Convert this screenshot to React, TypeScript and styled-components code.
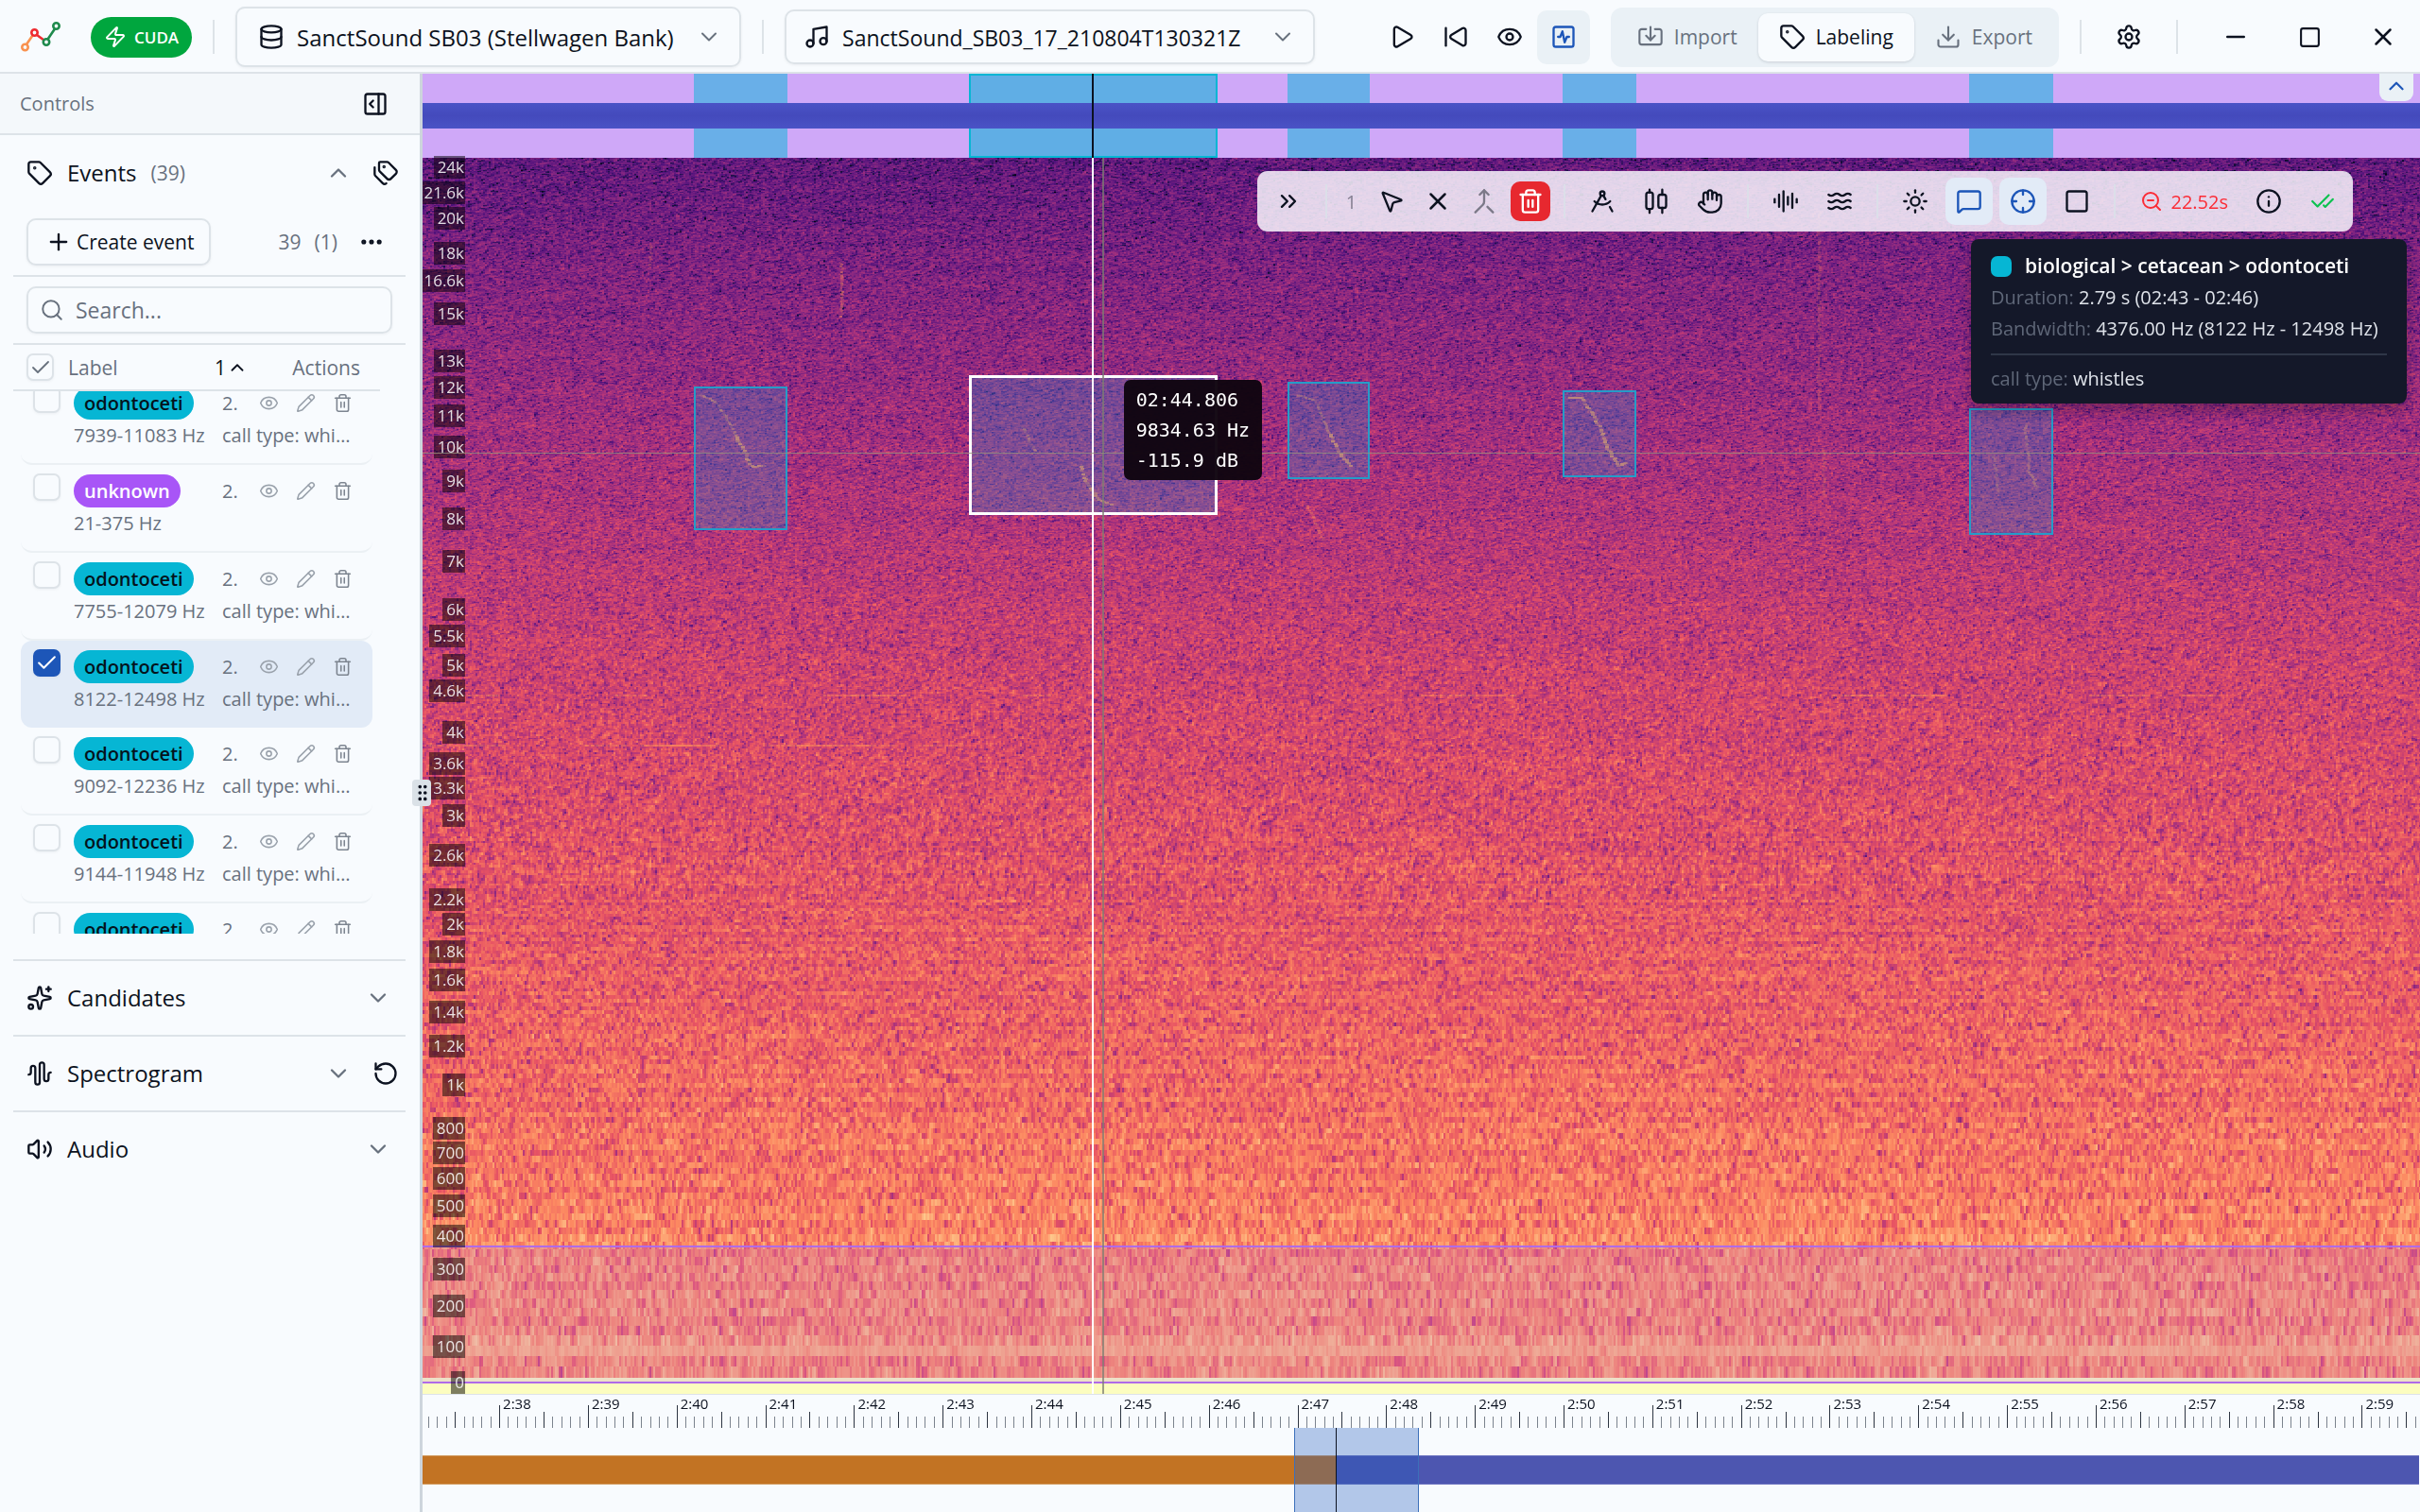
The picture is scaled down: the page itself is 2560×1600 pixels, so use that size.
import React, { useEffect, useRef } from "react";
import styled, { createGlobalStyle, css } from "styled-components";
import {
  AudioLines, AudioWaveform, Check, CheckCheck, ChevronDown, ChevronsRight, ChevronUp, Crosshair,
  Database, Download, DraftingCompass, Ellipsis, Eye, GripVertical, Hand, Import, Info, Merge,
  MessageSquare, Minus, MousePointer2, Music, PanelRightOpen, Pencil, Play, Plus, RotateCcw, Search,
  Settings, SkipBack, Sparkles, Square, SquareActivity, Sun, Tag, Tags, Trash2, Volume2, Waves, X,
  Zap, ZoomOut,
} from "lucide-react";

const c = {
  bg: "#f8fbfe",
  panel: "#f4f8fb",
  ink: "#0c1220",
  muted: "#68717e",
  line: "#dde3e8",
  soft: "#eaf1f6",
  blue: "#1d56b8",
  cyan: "#06b6d4",
  purple: "#a855f7",
};

const Global = createGlobalStyle`
  * { box-sizing: border-box; }
  body { margin: 0; background: ${c.bg}; color: ${c.ink}; font-family: "Open Sans", "Noto Sans", sans-serif; }
  button, input, select { font: inherit; color: inherit; }
  svg { display: block; flex: none; }
`;

/* ---------- time and frequency scales ---------- */

const T0 = 157.136;
const SPAN = 22.52;
const mel = (hz: number) => 2595 * Math.log10(1 + hz / 700);
const MAX_MEL = mel(24000);
const xPct = (t: number) => ((t - T0) / SPAN) * 100;
const yPct = (hz: number) => (1 - mel(hz) / MAX_MEL) * 100;

type Region = { start: number; end: number; low: number; high: number; selected?: boolean };

const regions: Region[] = [
  { start: 160.19, end: 161.25, low: 7755, high: 12079 },
  { start: 163.3, end: 166.1, low: 8122, high: 12498, selected: true },
  { start: 166.89, end: 167.82, low: 9092, high: 12236 },
  { start: 169.985, end: 170.82, low: 9144, high: 11948 },
  { start: 174.575, end: 175.52, low: 7640, high: 11290 },
];

const PLAYHEAD = 164.695;
const CURSOR = { time: 164.806, hz: 9834.63 };

/* ---------- shell ---------- */

const Shell = styled.div`
  display: flex;
  flex-direction: column;
  height: 100vh;
  overflow: hidden;
`;

const Header = styled.header`
  display: flex;
  align-items: center;
  justify-content: space-between;
  height: 78px;
  flex: none;
  padding-top: 2px;
  border-bottom: 2px solid ${c.line};
`;

const Cluster = styled.div<{ $gap?: number }>`
  display: flex;
  align-items: center;
  gap: ${(p) => p.$gap ?? 22}px;
`;

const StartCluster = styled(Cluster)`
  padding-left: 22px;
`;

const LogoLink = styled.a`
  display: block;
  width: 52px;
`;

const Rule = styled.span`
  width: 2px;
  height: 36px;
  background: ${c.line};
`;

const CudaBadge = styled.button`
  display: flex;
  align-items: center;
  gap: 8px;
  height: 43px;
  padding: 0 14px;
  border: 0;
  border-radius: 22px;
  background: #00a63e;
  color: #fff;
  font-size: 17px;
  font-weight: 600;
`;

const Picker = styled.label<{ $large?: boolean }>`
  display: flex;
  align-items: center;
  gap: 13px;
  height: ${(p) => (p.$large ? 64 : 58)}px;
  padding: 0 18px 0 ${(p) => (p.$large ? 22 : 18)}px;
  border: 2px solid ${c.line};
  border-radius: 10px;
  box-shadow: 0 1px 3px rgba(15, 23, 42, 0.06);
  font-size: ${(p) => (p.$large ? 24 : 23)}px;
  & > svg:last-child { color: ${c.muted}; }
`;

const PickerSelect = styled.select<{ $w: number }>`
  appearance: none;
  width: ${(p) => p.$w}px;
  padding: 2px 0 0;
  border: 0;
  background: transparent;
  font-weight: 500;
  line-height: 36px;
`;

const IconButton = styled.button<{ $on?: boolean; $w?: number }>`
  display: grid;
  place-items: center;
  width: ${(p) => p.$w ?? 56}px;
  height: 57px;
  padding: 0;
  border: 0;
  border-radius: 10px;
  background: ${(p) => (p.$on ? c.soft : "transparent")};
  color: ${(p) => (p.$on ? c.blue : c.ink)};
`;

const Tabs = styled.nav`
  display: flex;
  padding: 6px;
  border-radius: 12px;
  background: ${c.soft};
`;

const Tab = styled.button<{ $on?: boolean }>`
  display: flex;
  align-items: center;
  gap: 11px;
  height: 51px;
  padding: 0 22px;
  border: 0;
  border-radius: 10px;
  background: transparent;
  color: ${c.muted};
  font-size: 21px;
  ${(p) =>
    p.$on &&
    css`
      background: ${c.bg};
      color: ${c.ink};
      font-weight: 500;
      box-shadow: 0 1px 3px rgba(15, 23, 42, 0.15);
    `}
`;

const Body = styled.div`
  display: grid;
  grid-template-columns: 444px 3px minmax(0, 1fr);
  flex: 1;
  min-height: 0;
`;

/* ---------- sidebar ---------- */

const Sidebar = styled.aside`
  display: flex;
  flex-direction: column;
  min-width: 0;
`;

const SidebarHead = styled.div`
  display: flex;
  align-items: center;
  justify-content: space-between;
  height: 65px;
  padding: 0 20px 0 21px;
  border-bottom: 2px solid ${c.line};
  background: ${c.panel};
  color: ${c.muted};
  font-size: 20px;
`;

const SidebarBody = styled.div`
  padding: 0 15px 0 14px;
`;

const SectionHead = styled.div<{ $line?: boolean }>`
  display: flex;
  align-items: center;
  height: ${(p) => (p.$line ? 80 : 79)}px;
  padding-left: 14px;
  border-top: ${(p) => (p.$line ? `2px solid ${c.line}` : "0")};
`;

const SectionTitle = styled.h2`
  display: flex;
  flex: 1;
  align-items: center;
  gap: 15px;
  margin: 0;
  font-size: 24px;
  font-weight: 500;
  line-height: 32px;
`;

const Count = styled.span`
  color: ${c.muted};
  font-size: 21px;
  font-weight: 400;
`;

const GhostButton = styled.button<{ $w?: number; $muted?: boolean }>`
  display: grid;
  place-items: center;
  width: ${(p) => p.$w ?? 42}px;
  height: 42px;
  padding: 0;
  border: 0;
  background: transparent;
  color: ${(p) => (p.$muted ? c.muted : c.ink)};
`;

const ActionsBar = styled.div`
  display: flex;
  align-items: center;
  height: 71px;
  padding: 9px 0 10px 14px;
  border-bottom: 2px solid ${c.line};
  color: ${c.muted};
  font-size: 21px;
`;

const CreateButton = styled.button`
  display: flex;
  align-items: center;
  gap: 5px;
  height: 50px;
  margin-right: auto;
  padding: 0 16px 0 18px;
  border: 2px solid ${c.line};
  border-radius: 10px;
  background: ${c.bg};
  color: ${c.ink};
  font-size: 21px;
  font-weight: 500;
  box-shadow: 0 1px 3px rgba(15, 23, 42, 0.06);
`;

const Total = styled.span`
  margin-right: 14px;
`;

const SearchBar = styled.div`
  padding: 10px 14px;
  border-bottom: 2px solid ${c.line};
`;

const SearchBox = styled.label`
  display: flex;
  align-items: center;
  gap: 12px;
  height: 50px;
  padding: 0 12px;
  border: 2px solid ${c.line};
  border-radius: 10px;
  color: ${c.muted};
  box-shadow: 0 1px 3px rgba(15, 23, 42, 0.05);
`;

const SearchInput = styled.input`
  width: 100%;
  padding: 0;
  border: 0;
  outline: 0;
  background: transparent;
  font-size: 23px;
  &::placeholder { color: ${c.muted}; opacity: 1; }
`;

const EventTable = styled.table`
  display: block;
  height: 623px;
  width: 388px;
  overflow: hidden;
  margin-bottom: 27px;
  color: ${c.muted};
`;

const TableHead = styled.thead`
  display: block;
  position: relative;
  z-index: 1;
  background: ${c.bg};
`;

const HeadRow = styled.tr`
  display: grid;
  grid-template-columns: 44px 155px 1fr auto;
  align-items: center;
  height: 49px;
  padding: 0 21px 0 14px;
  border-bottom: 2px solid ${c.line};
  font-size: 21px;
`;

const HeadCell = styled.th<{ $dark?: boolean }>`
  display: flex;
  align-items: center;
  gap: 1px;
  padding: 0;
  font-weight: 500;
  color: ${(p) => (p.$dark ? c.ink : c.muted)};
`;

const Rows = styled.tbody`
  display: block;
  margin: -15px 8px 0;
`;

const Row = styled.tr<{ $on?: boolean }>`
  display: grid;
  grid-template-columns: 43px 157px 39px 1fr;
  grid-template-rows: 36px 33px;
  height: ${(p) => (p.$on ? 92 : 93)}px;
  padding: 9px 8px 0 13px;
  border-radius: 12px;
  border-bottom: ${(p) => (p.$on ? "0" : "2px solid #ebf0f4")};
  background: ${(p) => (p.$on ? "#e2ebf7" : "transparent")};
  font-size: 20px;
`;

const Cell = styled.td<{ $wide?: boolean; $start?: number; $top?: boolean }>`
  display: flex;
  align-items: ${(p) => (p.$top ? "flex-start" : "center")};
  padding: 0;
  min-width: 0;
  white-space: nowrap;
  grid-column: ${(p) => (p.$wide ? "3 / 5" : p.$start ?? "auto")};
`;

const Clip = styled.span`
  overflow: hidden;
  max-width: 142px;
  text-overflow: ellipsis;
  white-space: nowrap;
`;

const CheckBox = styled.label`
  display: grid;
  place-items: center;
  width: 29px;
  height: 29px;
  & > * { grid-area: 1 / 1; }
  & > svg { z-index: 1; pointer-events: none; }
`;

const CheckInput = styled.input`
  appearance: none;
  width: 29px;
  height: 29px;
  margin: 0;
  border: 2px solid ${c.line};
  border-radius: 7px;
  background: ${c.bg};
  box-shadow: 0 1px 3px rgba(15, 23, 42, 0.05);
  &[data-fill="true"] {
    border-color: ${c.blue};
    background: ${c.blue};
  }
`;

const Pill = styled.span<{ $unknown?: boolean }>`
  height: 35px;
  padding: 0 11px;
  border-radius: 18px;
  background: ${(p) => (p.$unknown ? c.purple : c.cyan)};
  color: ${(p) => (p.$unknown ? "#fff" : "#04131c")};
  font-weight: 600;
  line-height: 35px;
`;

const RowActions = styled.div`
  display: flex;
  gap: 18px;
  color: #9aa2ac;
  & > button:last-child { color: #7d8590; }
`;

const TinyButton = styled.button`
  padding: 0;
  border: 0;
  background: transparent;
  color: inherit;
`;

const Divider = styled.div`
  display: grid;
  place-content: center;
  background: #cdd5dc;
  z-index: 3;
`;

const Handle = styled.button`
  display: grid;
  place-items: center;
  width: 20px;
  height: 28px;
  padding: 0;
  border: 0;
  border-radius: 4px;
  background: #dae1e7;
  color: ${c.ink};
`;

/* ---------- viewer ---------- */

const Viewer = styled.main`
  display: flex;
  flex-direction: column;
  min-width: 0;
`;

const Lane = styled.div`
  position: relative;
  flex: none;
  height: 89px;
  overflow: hidden;
  background: #cfa8f8;
`;

const LaneBlock = styled.div<{ $on?: boolean }>`
  position: absolute;
  top: 0;
  bottom: 0;
  background: ${(p) => (p.$on ? "#60aee5" : "#69afe8")};
  border: ${(p) => (p.$on ? `2px solid ${c.cyan}` : "0")};
`;

const LaneWave = styled.div`
  position: absolute;
  inset: 31px 0 31px;
  background: linear-gradient(#4a53c6, #444abc 50%, #4a53c6);
`;

const VLine = styled.div<{ $c: string; $w: number }>`
  position: absolute;
  top: 0;
  bottom: 0;
  width: ${(p) => p.$w}px;
  margin-left: -1px;
  background: ${(p) => p.$c};
`;

const HLine = styled.div`
  position: absolute;
  left: 0;
  right: 0;
  height: 1px;
  margin-top: -1px;
  background: rgba(150, 145, 125, 0.8);
`;

const LaneToggle = styled.button`
  position: absolute;
  top: 0;
  right: 7px;
  display: grid;
  place-items: center;
  width: 36px;
  height: 29px;
  padding: 0 0 7px;
  border: 0;
  border-radius: 0 0 9px 9px;
  background: ${c.soft};
  color: ${c.blue};
`;

const Plot = styled.div`
  position: relative;
  flex: 1;
  min-height: 0;
`;

const Canvas = styled.canvas`
  position: absolute;
  inset: 0;
  width: 100%;
  height: 100%;
`;

const RegionBox = styled.div<{ $on?: boolean }>`
  position: absolute;
  background: rgba(40, 140, 205, 0.29);
  border: ${(p) => (p.$on ? "3px solid #fff" : "2px solid #269cc8")};
`;

const NoiseBand = styled.div`
  position: absolute;
  left: 0;
  right: 0;
  background: rgba(180, 110, 240, 0.2);
  border: solid #b06be8;
  border-width: 2px 0;
`;

const FreqLabel = styled.span`
  position: absolute;
  right: calc(100% - 45px);
  margin-top: -13px;
  padding: 0 1px 0 4px;
  background: rgba(0, 0, 0, 0.5);
  color: rgba(255, 255, 255, 0.85);
  font-size: 17px;
  line-height: 24px;
`;

const Toolbar = styled.div`
  position: absolute;
  top: 14px;
  right: 71px;
  display: flex;
  align-items: center;
  height: 64px;
  padding: 0 7px 0 8px;
  border-radius: 11px;
  background: rgba(247, 243, 251, 0.86);
`;

const ToolRule = styled.span`
  width: 2px;
  height: 36px;
  margin: 0 14px;
  background: #dcdfe9;
`;

const Tool = styled.button<{ $on?: boolean; $w?: number; $muted?: boolean }>`
  display: grid;
  place-items: center;
  width: ${(p) => p.$w ?? 50}px;
  height: 50px;
  margin-right: 7px;
  padding: 0;
  border: 0;
  border-radius: 10px;
  background: ${(p) => (p.$on ? "#e2ebf7" : "transparent")};
  color: ${(p) => (p.$on ? c.blue : p.$muted ? "#7c7988" : c.ink)};
`;

const ToolGroup = styled.div`
  display: flex;
  align-items: center;
  & > :last-child { margin-right: 0; }
`;

const DeleteTool = styled(Tool)`
  height: 42px;
  background: #e7282f;
  color: #fff;
`;

const SelectedCount = styled.span`
  width: 22px;
  margin-right: 11px;
  color: #857f92;
  font-size: 20px;
  text-align: center;
`;

const ZoomLevel = styled.button`
  display: flex;
  align-items: center;
  gap: 8px;
  margin-right: 18px;
  padding: 0 0 0 12px;
  border: 0;
  background: transparent;
  color: #fb2c36;
  font-size: 20px;
`;

const EventTip = styled.div`
  position: absolute;
  top: 86px;
  right: 14px;
  min-width: 461px;
  padding: 12px 21px 10px;
  border-radius: 8px;
  background: #141829;
  color: #dfe3ea;
  font-size: 20px;
  line-height: 33px;
  white-space: nowrap;
  box-shadow: 0 8px 16px rgba(0, 0, 0, 0.25);
`;

const TipTitle = styled.div`
  display: flex;
  align-items: center;
  gap: 14px;
  color: #fff;
  font-size: 21px;
  font-weight: 600;
`;

const Swatch = styled.span`
  width: 22px;
  height: 22px;
  border-radius: 7px;
  background: ${c.cyan};
`;

const TipLine = styled.div<{ $split?: boolean }>`
  ${(p) =>
    p.$split &&
    css`
      margin-top: 10px;
      padding-top: 8px;
      border-top: 2px solid #2f3647;
    `}
`;

const TipKey = styled.span`
  color: #5f6778;
`;

const CursorTip = styled.div`
  position: absolute;
  margin: -78px 0 0 22px;
  padding: 5px 13px;
  border-radius: 7px;
  background: rgba(16, 5, 16, 0.97);
  color: #fff;
  font-family: "DejaVu Sans Mono", monospace;
  font-size: 20px;
  line-height: 32px;
  white-space: pre;
`;

const Axis = styled.div`
  position: relative;
  flex: none;
  height: 36px;
  overflow: hidden;
  border-top: 1px solid ${c.line};
`;

const TickMark = styled.span<{ $h: number }>`
  position: absolute;
  bottom: 0;
  width: 1px;
  height: ${(p) => p.$h}px;
  background: ${(p) => (p.$h > 12 ? "#2d3542" : "#7b838e")};
`;

const TickLabel = styled.span`
  position: absolute;
  top: 0;
  margin-left: 4px;
  font-size: 15px;
  line-height: 18px;
`;

const Overview = styled.div`
  position: relative;
  flex: none;
  height: 89px;
  padding-top: 29px;
`;

const OverviewBar = styled.div`
  display: flex;
  height: 31px;
  padding-right: 1px;
`;

const OverviewPart = styled.div<{ $c: string; $edge: string; $w?: number }>`
  flex: ${(p) => (p.$w ? `0 0 ${p.$w}%` : "1")};
  border: solid ${(p) => p.$edge};
  border-width: 1px 0;
  background: ${(p) => p.$c};
`;

const OverviewWindow = styled.div`
  position: absolute;
  top: 0;
  bottom: 0;
  background: rgba(30, 90, 190, 0.32);
  border: solid #3c70ba;
  border-width: 0 1px;
`;

/* ---------- drawings ---------- */

const Logo = () => (
  <svg width="44" height="40" viewBox="0 0 44 40" fill="none" strokeWidth="2.6">
    <g stroke="#f9924f"><circle cx="4.5" cy="31" r="3.2" /><path d="M6 28 12.5 18.5" /></g>
    <g stroke="#ee2a30"><circle cx="14.5" cy="15.5" r="3.2" /><path d="M17 18 24.5 23.5" /></g>
    <g stroke="#1f8a4c"><circle cx="27" cy="25.5" r="3.2" /><circle cx="37.5" cy="8.5" r="3.2" /><path d="M28.5 22.5 36 11.5" /></g>
  </svg>
);

const Candles = () => (
  <svg width="28" height="28" viewBox="0 0 24 24" fill="none" stroke="currentColor" strokeWidth="2" strokeLinecap="round">
    <rect x="3" y="4" width="6" height="15" rx="2" />
    <rect x="14" y="6" width="7" height="12" rx="2" />
    <path d="M6 1.500V4M6 19v3.500M17.500 1.500V6M17.500 18v4.500" />
  </svg>
);

const stops = [
  [0, 0, 4], [29, 17, 71], [81, 18, 124], [131, 38, 129], [183, 55, 121],
  [231, 82, 99], [252, 137, 97], [254, 196, 136], [252, 253, 191],
];

const magma = Array.from({ length: 256 }, (_, i) => {
  const p = (i / 255) * 8;
  const a = Math.min(7, Math.floor(p));
  return [0, 1, 2].map((k) => stops[a][k] + (stops[a + 1][k] - stops[a][k]) * (p - a));
});

const levels: [number, number][] = [
  [0, 0.28], [0.05, 0.32], [0.1, 0.36], [0.2, 0.42], [0.3, 0.48], [0.4, 0.54], [0.5, 0.58],
  [0.6, 0.62], [0.7, 0.65], [0.8, 0.695], [0.87, 0.73], [0.885, 0.74], [1, 0.76],
];

function level(v: number) {
  const i = Math.max(1, levels.findIndex((l) => l[0] >= v));
  const [a, b] = [levels[i - 1], levels[i]];
  return a[1] + ((v - a[0]) / (b[0] - a[0])) * (b[1] - a[1]);
}

function noise(a: number, b: number) {
  let h = Math.imul(a + 1013, 374761393) ^ Math.imul(b + 77, 668265263);
  h = Math.imul(h ^ (h >>> 13), 1274126177);
  h = Math.imul(h ^ (h >>> 15), 2246822519);
  return ((h ^ (h >>> 16)) >>> 0) / 4294967296;
}

const BIN = 48000 / 2048;

function drawSpectrogram(canvas: HTMLCanvasElement) {
  const w = (canvas.width = canvas.clientWidth);
  const h = (canvas.height = canvas.clientHeight);
  const ctx = canvas.getContext("2d");
  if (!ctx || !w || !h) return;
  const img = ctx.createImageData(w, h);
  const cols = Math.ceil(w / 2) + 2;
  const row = new Float32Array(cols);
  const before = new Float32Array(cols);
  let lastBin = -1;
  for (let y = 0; y < h; y++) {
    const v = y / h;
    const hz = 700 * (Math.pow(10, ((1 - v) * MAX_MEL) / 2595) - 1);
    const bin = Math.round(hz / BIN);
    if (bin !== lastBin) {
      lastBin = bin;
      let base = level(v) + (noise(bin, -5) - 0.5) * (v > 0.55 ? 0.045 : 0.01);
      if (bin === 4) base += 0.07;
      if (bin === 5) base += 0.03;
      let prev = 0;
      const bleed = v < 0.6 ? 0.35 : 0;
      for (let i = 0; i < cols; i++) {
        const db = Math.max(-2.2, Math.log10(-Math.log(noise(bin, i) * 0.998 + 0.001) + 0.006));
        const mixed = db * 0.8 + prev * 0.3 + before[i] * bleed;
        prev = db;
        before[i] = db;
        const mean = 0.25 * (1.1 + bleed);
        row[i] = base + (mixed + mean) * (bin === 4 ? 0.05 : 0.135) + Math.sin(i / 61 + bin / 9) * 0.006;
      }
    }
    for (let x = 0; x < w; x++) {
      const t = bin <= 1 ? 1 : Math.min(0.9, row[x >> 1]);
      const col = magma[Math.max(6, Math.min(255, Math.round(t * 255)))];
      const o = (y * w + x) * 4;
      img.data[o] = col[0];
      img.data[o + 1] = col[1];
      img.data[o + 2] = col[2];
      img.data[o + 3] = 255;
    }
  }
  ctx.putImageData(img, 0, 0);

  const px = (t: number) => ((t - T0) / SPAN) * w;
  const py = (f: number) => (yPct(f) / 100) * h;
  const trace = (points: [number, number][], alpha: number, size = 3) => {
    let seed = 0;
    for (let i = 1; i < points.length; i++) {
      const [x1, y1, x2, y2] = [px(points[i - 1][0]), py(points[i - 1][1]), px(points[i][0]), py(points[i][1])];
      const n = Math.ceil(Math.hypot(x2 - x1, y2 - y1) / 2);
      for (let k = 0; k < n; k++) {
        seed++;
        const jitter = Math.round((noise(seed, Math.round(x1)) - 0.5) * 2);
        ctx.fillStyle = `rgba(248,135,92,${alpha * (0.25 + noise(seed, 501 + i))})`;
        ctx.fillRect(Math.round(x1 + ((x2 - x1) * k) / n) + jitter - 1, Math.round(y1 + ((y2 - y1) * k) / n), size, 2);
      }
    }
  };
  trace([[160.28, 11800], [160.45, 11500], [160.6, 10800], [160.72, 10100]], 0.6);
  trace([[160.66, 10400], [160.74, 10000], [160.84, 9450], [160.98, 9500]], 1, 4);
  trace([[163.9, 10700], [164, 10100], [164.05, 9900]], 0.5);
  trace([[164.55, 9500], [164.6, 9050], [164.75, 8550], [164.9, 8400]], 0.9, 4);
  trace([[167, 11800], [167.2, 11600], [167.35, 10500]], 0.5);
  trace([[167.35, 10500], [167.45, 9950], [167.6, 9450]], 1, 4);
  trace([[170.05, 11700], [170.2, 11700], [170.35, 11000], [170.5, 9950], [170.62, 9500], [170.72, 9600]], 0.95, 4);
  trace([[175.2, 10800], [175.25, 9300], [175.35, 8800]], 0.5);
  trace([[174.85, 9800], [174.9, 8700]], 0.4);
  trace([[161.86, 17600], [161.86, 14900]], 0.45);
  trace([[172.88, 20500], [172.88, 11000]], 0.22);
  trace([[172.93, 10000], [172.93, 8600]], 0.3);
  trace([[159.7, 18600], [159.7, 17300]], 0.25);
  trace([[167.1, 8400], [167.3, 7500]], 0.4);
  for (let i = 0; i < 14; i++) {
    const t = T0 + noise(i, 900) * 20;
    trace([[t, 4550], [t + 0.3 + noise(i, 7) * 0.5, 4550]], 0.4);
    const s = T0 + noise(i, 33) * 6;
    trace([[s, 3850], [s + 0.5, 3850]], 0.35);
  }
}

function Spectrogram() {
  const ref = useRef<HTMLCanvasElement>(null);
  useEffect(() => {
    const el = ref.current;
    if (!el) return;
    const draw = () => drawSpectrogram(el);
    draw();
    window.addEventListener("resize", draw);
    return () => window.removeEventListener("resize", draw);
  }, []);
  return <Canvas ref={ref} aria-label="Spectrogram" />;
}

/* ---------- data ---------- */

const freqs = [
  24000, 21600, 20000, 18000, 16600, 15000, 13000, 12000, 11000, 10000, 9000, 8000, 7000, 6000, 5500,
  5000, 4600, 4000, 3600, 3300, 3000, 2600, 2200, 2000, 1800, 1600, 1400, 1200, 1000, 800, 700, 600,
  500, 400, 300, 200, 100, 0,
];

const freqTop = (f: number) => (f === 0 ? "calc(100% - 11px)" : f === 24000 ? "11px" : `${yPct(f)}%`);

const rows = [
  { label: "odontoceti", range: "7939-11083 Hz", note: "call type: whistles" },
  { label: "unknown", range: "21-375 Hz", note: "" },
  { label: "odontoceti", range: "7755-12079 Hz", note: "call type: whistles" },
  { label: "odontoceti", range: "8122-12498 Hz", note: "call type: whistles", selected: true },
  { label: "odontoceti", range: "9092-12236 Hz", note: "call type: whistles" },
  { label: "odontoceti", range: "9144-11948 Hz", note: "call type: whistles" },
  { label: "odontoceti", range: "7612-11290 Hz", note: "call type: whistles" },
];

const ticks = Array.from({ length: 225 }, (_, i) => 1572 + i).map((n) => ({
  t: n / 10,
  h: n % 10 === 0 ? 24 : n % 5 === 0 ? 17 : 12,
}));

/* ---------- parts ---------- */

function TopBar() {
  return (
    <Header>
      <StartCluster>
        <LogoLink href="#" aria-label="Home"><Logo /></LogoLink>
        <CudaBadge><Zap size={24} />CUDA</CudaBadge>
        <Rule />
        <Picker $large>
          <Database size={28} />
          <PickerSelect $w={409} aria-label="Dataset"><option>SanctSound SB03 (Stellwagen Bank)</option></PickerSelect>
          <ChevronDown size={28} strokeWidth={1.7} />
        </Picker>
        <Rule />
        <Picker>
          <Music size={28} />
          <PickerSelect $w={439} aria-label="Recording"><option>SanctSound_SB03_17_210804T130321Z</option></PickerSelect>
          <ChevronDown size={28} strokeWidth={1.7} />
        </Picker>
      </StartCluster>
      <Cluster>
        <Cluster $gap={1}>
          <IconButton aria-label="Play"><Play size={28} /></IconButton>
          <IconButton aria-label="To start"><SkipBack size={28} /></IconButton>
          <IconButton aria-label="Follow"><Eye size={28} /></IconButton>
          <IconButton $on aria-label="Activity"><SquareActivity size={28} /></IconButton>
        </Cluster>
        <Tabs>
          <Tab><Import size={28} strokeWidth={1.8} />Import</Tab>
          <Tab $on><Tag size={28} />Labeling</Tab>
          <Tab><Download size={28} strokeWidth={1.8} />Export</Tab>
        </Tabs>
        <Rule />
        <IconButton aria-label="Settings"><Settings size={28} /></IconButton>
        <Rule />
        <Cluster $gap={0}>
          <IconButton $w={78} aria-label="Minimize"><Minus size={30} /></IconButton>
          <IconButton $w={78} aria-label="Maximize"><Square size={25} /></IconButton>
          <IconButton $w={78} aria-label="Close"><X size={30} /></IconButton>
        </Cluster>
      </Cluster>
    </Header>
  );
}

function EventsList() {
  return (
    <EventTable>
      <TableHead>
        <HeadRow>
          <HeadCell>
            <CheckBox><CheckInput type="checkbox" aria-label="Select all" /><Check size={24} strokeWidth={1.8} /></CheckBox>
          </HeadCell>
          <HeadCell>Label</HeadCell>
          <HeadCell $dark>1<ChevronUp size={22} /></HeadCell>
          <HeadCell>Actions</HeadCell>
        </HeadRow>
      </TableHead>
      <Rows>
        {rows.map((r) => (
          <Row key={r.range} $on={r.selected}>
            <Cell $top>
              <CheckBox>
                <CheckInput type="checkbox" aria-label={`Select ${r.range}`} defaultChecked={r.selected} data-fill={!!r.selected} />
                {r.selected && <Check size={25} color="#fff" />}
              </CheckBox>
            </Cell>
            <Cell><Pill $unknown={r.label === "unknown"}>{r.label}</Pill></Cell>
            <Cell>2.</Cell>
            <Cell>
              <RowActions>
                <TinyButton aria-label="Show"><Eye size={21} strokeWidth={1.8} /></TinyButton>
                <TinyButton aria-label="Edit"><Pencil size={21} strokeWidth={1.8} /></TinyButton>
                <TinyButton aria-label="Delete"><Trash2 size={21} strokeWidth={1.8} /></TinyButton>
              </RowActions>
            </Cell>
            <Cell $start={2}>{r.range}</Cell>
            <Cell $wide><Clip>{r.note}</Clip></Cell>
          </Row>
        ))}
      </Rows>
    </EventTable>
  );
}

function Controls() {
  return (
    <Sidebar>
      <SidebarHead>
        Controls
        <GhostButton $w={54} aria-label="Collapse controls"><PanelRightOpen size={28} /></GhostButton>
      </SidebarHead>
      <SidebarBody>
        <SectionHead>
          <SectionTitle><Tag size={28} />Events <Count>(39)</Count></SectionTitle>
          <GhostButton $muted $w={58} aria-label="Collapse events"><ChevronUp size={28} /></GhostButton>
          <GhostButton aria-label="Tags"><Tags size={28} /></GhostButton>
        </SectionHead>
        <ActionsBar>
          <CreateButton><Plus size={28} />Create event</CreateButton>
          <Total>39</Total>
          <span>(1)</span>
          <GhostButton $w={72} aria-label="More"><Ellipsis size={28} strokeWidth={2.4} /></GhostButton>
        </ActionsBar>
        <SearchBar>
          <SearchBox><Search size={26} strokeWidth={1.8} /><SearchInput placeholder="Search..." aria-label="Search" /></SearchBox>
        </SearchBar>
        <EventsList />
        <SectionHead $line>
          <SectionTitle><Sparkles size={28} />Candidates</SectionTitle>
          <GhostButton $muted $w={58} aria-label="Expand candidates"><ChevronDown size={28} /></GhostButton>
        </SectionHead>
        <SectionHead $line>
          <SectionTitle><AudioWaveform size={28} />Spectrogram</SectionTitle>
          <GhostButton $muted $w={58} aria-label="Expand spectrogram"><ChevronDown size={28} /></GhostButton>
          <GhostButton aria-label="Reset"><RotateCcw size={28} /></GhostButton>
        </SectionHead>
        <SectionHead $line>
          <SectionTitle><Volume2 size={28} />Audio</SectionTitle>
          <GhostButton $muted $w={58} aria-label="Expand audio"><ChevronDown size={28} /></GhostButton>
        </SectionHead>
      </SidebarBody>
    </Sidebar>
  );
}

function ToolStrip() {
  return (
    <Toolbar role="toolbar" aria-label="Editing tools">
      <ToolGroup><Tool aria-label="Collapse toolbar"><ChevronsRight size={28} /></Tool></ToolGroup>
      <ToolRule />
      <ToolGroup>
        <SelectedCount>1</SelectedCount>
        <Tool $w={42} aria-label="Select"><MousePointer2 size={28} /></Tool>
        <Tool $w={42} aria-label="Deselect"><X size={30} /></Tool>
        <Tool $w={42} $muted aria-label="Merge"><Merge size={28} /></Tool>
        <DeleteTool $w={42} aria-label="Delete"><Trash2 size={28} /></DeleteTool>
      </ToolGroup>
      <ToolRule />
      <ToolGroup>
        <Tool aria-label="Measure"><DraftingCompass size={28} /></Tool>
        <Tool aria-label="Levels"><Candles /></Tool>
        <Tool aria-label="Pan"><Hand size={28} /></Tool>
      </ToolGroup>
      <ToolRule />
      <ToolGroup>
        <Tool aria-label="Waveform"><AudioLines size={28} /></Tool>
        <Tool aria-label="Contours"><Waves size={28} /></Tool>
      </ToolGroup>
      <ToolRule />
      <ToolGroup>
        <Tool aria-label="Brightness"><Sun size={28} /></Tool>
        <Tool $on aria-label="Event details"><MessageSquare size={28} /></Tool>
        <Tool $on aria-label="Crosshair"><Crosshair size={28} /></Tool>
        <Tool aria-label="Box"><Square size={28} /></Tool>
      </ToolGroup>
      <ToolRule />
      <ToolGroup>
        <ZoomLevel><ZoomOut size={24} />22.52s</ZoomLevel>
        <Tool aria-label="Info"><Info size={28} /></Tool>
        <Tool aria-label="Saved"><CheckCheck size={26} color="#0cc24f" /></Tool>
      </ToolGroup>
    </Toolbar>
  );
}

export default function App() {
  return (
    <Shell>
      <Global />
      <TopBar />
      <Body>
        <Controls />
        <Divider><Handle aria-label="Resize"><GripVertical size={22} /></Handle></Divider>
        <Viewer>
          <Lane>
            {regions.map((r) => (
              <LaneBlock key={r.start} $on={r.selected} style={{ left: `${xPct(r.start)}%`, right: `${100 - xPct(r.end)}%` }} />
            ))}
            <LaneWave />
            <VLine $c={c.ink} $w={2} style={{ left: `${xPct(PLAYHEAD)}%` }} />
            <LaneToggle aria-label="Collapse lane"><ChevronUp size={26} /></LaneToggle>
          </Lane>
          <Plot>
            <Spectrogram />
            <NoiseBand style={{ top: `${yPct(375)}%`, bottom: `${100 - yPct(21)}%` }} />
            {regions.map((r) => (
              <RegionBox
                key={r.start}
                $on={r.selected}
                style={{
                  left: `${xPct(r.start)}%`, right: `${100 - xPct(r.end)}%`,
                  top: `${yPct(r.high)}%`, bottom: `${100 - yPct(r.low)}%`,
                }}
              />
            ))}
            {freqs.map((f) => (
              <FreqLabel key={f} style={{ top: freqTop(f) }}>{f >= 1000 ? `${f / 1000}k` : f}</FreqLabel>
            ))}
            <VLine $c="#fff" $w={2} style={{ left: `${xPct(PLAYHEAD)}%` }} />
            <VLine $c="rgba(125,125,115,.75)" $w={2} style={{ left: `${xPct(CURSOR.time)}%` }} />
            <HLine style={{ top: `${yPct(CURSOR.hz)}%` }} />
            <CursorTip style={{ left: `${xPct(CURSOR.time)}%`, top: `${yPct(CURSOR.hz)}%` }}>
              {"02:44.806\n9834.63 Hz\n-115.9 dB"}
            </CursorTip>
            <ToolStrip />
            <EventTip role="tooltip">
              <TipTitle><Swatch />biological &gt; cetacean &gt; odontoceti</TipTitle>
              <TipLine><TipKey>Duration:</TipKey> 2.79 s (02:43 - 02:46)</TipLine>
              <TipLine><TipKey>Bandwidth:</TipKey> 4376.00 Hz (8122 Hz - 12498 Hz)</TipLine>
              <TipLine $split><TipKey>call type:</TipKey> whistles</TipLine>
            </EventTip>
          </Plot>
          <Axis>
            {ticks.map((k) => (
              <React.Fragment key={k.t}>
                <TickMark $h={k.h} style={{ left: `${xPct(k.t)}%` }} />
                {k.h === 24 && <TickLabel style={{ left: `${xPct(k.t)}%` }}>2:{Math.round(k.t) - 120}</TickLabel>}
              </React.Fragment>
            ))}
          </Axis>
          <Overview>
            <OverviewBar>
              <OverviewPart $c="#c27323" $edge="#d19a5e" $w={45.72} />
              <OverviewPart $c="#4d56b0" $edge="#6b73bf" />
            </OverviewBar>
            <OverviewWindow style={{ left: "43.63%", right: "50.12%" }} />
            <VLine $c={c.ink} $w={1} style={{ left: "45.77%" }} />
          </Overview>
        </Viewer>
      </Body>
    </Shell>
  );
}
